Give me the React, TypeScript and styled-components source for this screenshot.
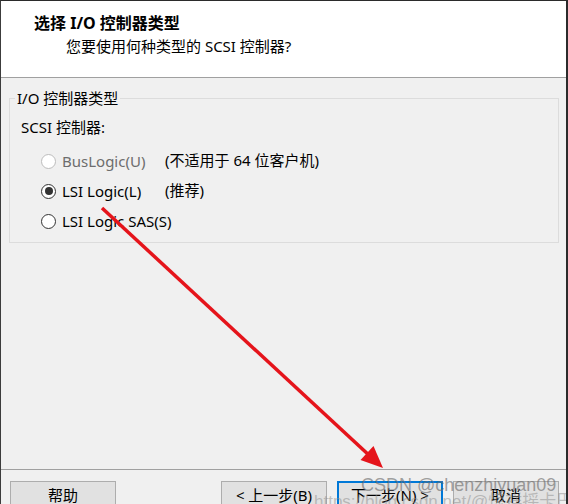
import React from "react";
import styled, { createGlobalStyle } from "styled-components";

const Global = createGlobalStyle`
  html, body { margin: 0; padding: 0; background: #f0f0f0; }
  body { font-family: "Noto Sans", "Noto Sans CJK SC", sans-serif; }
`;

const Window = styled.div`
  position: relative;
  width: 568px;
  height: 504px;
  box-sizing: border-box;
  border-top: 1px solid #2b2b2b;
  border-left: 1px solid #3c3c3c;
  border-right: 2px solid #2b2b2b;
  background: #f0f0f0;
  display: flex;
  flex-direction: column;
  overflow: hidden;
  font-size: 15px;
  color: #000;
`;

const Header = styled.header`
  height: 77px;
  box-sizing: border-box;
  background: #fff;
  border-bottom: 1px solid #a0a0a0;
  padding: 12px 0 0 33px;
`;

const Title = styled.div`
  font-size: 16px;
  font-weight: 700;
  line-height: 20px;
`;

const Subtitle = styled.div`
  margin: 3px 0 0 32px;
  font-size: 15px;
  line-height: 20px;
`;

const Main = styled.main`
  flex: 1;
  padding: 10px 7px 0 8px;
`;

const Group = styled.fieldset`
  margin: 0;
  padding: 0 0 0 11px;
  height: 155px;
  box-sizing: border-box;
  border: 1px solid #dcdcdc;
  min-width: 0;
`;

const Legend = styled.legend`
  margin-left: -6px;
  padding: 0 2px;
  font-size: 15px;
  line-height: 20px;
`;

const FieldLabel = styled.div`
  margin-top: 9px;
  line-height: 20px;
`;

const Options = styled.div`
  margin-top: 9px;
  padding-left: 20px;
  display: grid;
  grid-template-columns: 124px auto;
  grid-auto-rows: 30px;
  align-items: center;
`;

const OptionLabel = styled.label<{ $disabled?: boolean }>`
  display: flex;
  align-items: center;
  gap: 6px;
  line-height: 20px;
  white-space: nowrap;
  color: ${(p) => (p.$disabled ? "#6d6d6d" : "#000")};
`;

const Note = styled.span`
  line-height: 20px;
  margin-top: -3px;
  white-space: nowrap;
`;

const RadioCircle = styled.span<{ $checked?: boolean; $disabled?: boolean }>`
  flex: none;
  width: 15px;
  height: 15px;
  box-sizing: border-box;
  border-radius: 50%;
  border: 1px solid ${(p) => (p.$disabled ? "#bcbcbc" : "#333")};
  background: #fff;
  display: flex;
  align-items: center;
  justify-content: center;
  &::after {
    content: "";
    width: 8px;
    height: 8px;
    border-radius: 50%;
    background: #333;
    display: ${(p) => (p.$checked ? "block" : "none")};
  }
`;

const Footer = styled.footer`
  height: 35px;
  box-sizing: border-box;
  border-top: 1px solid #a0a0a0;
  padding: 11px 7px 0 9px;
  display: flex;
  justify-content: space-between;
  align-items: flex-start;
`;

const ButtonGroup = styled.div`
  display: flex;
  gap: 10px;
`;

const Button = styled.button<{ $focused?: boolean }>`
  width: 106px;
  height: 29px;
  box-sizing: border-box;
  padding: 0;
  margin: 0;
  background: #e1e1e1;
  border: ${(p) => (p.$focused ? "2px solid #0078d7" : "1px solid #adadad")};
  font-family: "Noto Sans", "Noto Sans CJK SC", sans-serif;
  font-size: 15px;
  line-height: ${(p) => (p.$focused ? "25px" : "27px")};
  color: #000;
  white-space: nowrap;
`;

const Overlay = styled.svg`
  position: absolute;
  left: 0;
  top: 0;
  pointer-events: none;
`;

const WatermarkMain = styled.div`
  position: absolute;
  left: 360px;
  top: 474px;
  font-family: "Liberation Sans", Arial, sans-serif;
  font-size: 18px;
  line-height: 20px;
  color: rgba(105, 105, 105, 0.62);
  white-space: nowrap;
  pointer-events: none;
`;

const WatermarkSub = styled.div`
  position: absolute;
  left: 313px;
  top: 491px;
  font-family: "Liberation Sans", "Noto Sans CJK SC", sans-serif;
  font-size: 17px;
  line-height: 20px;
  color: rgba(140, 140, 140, 0.5);
  white-space: nowrap;
  pointer-events: none;
`;

type Opt = { label: string; note?: string; checked?: boolean; disabled?: boolean };

const options: Opt[] = [
  { label: "BusLogic(U)", note: "(不适用于 64 位客户机)", disabled: true },
  { label: "LSI Logic(L)", note: "(推荐)", checked: true },
  { label: "LSI Logic SAS(S)" },
];

export default function App() {
  return (
    <>
      <Global />
      <Window>
        <Header>
          <Title>选择 I/O 控制器类型</Title>
          <Subtitle>您要使用何种类型的 SCSI 控制器?</Subtitle>
        </Header>
        <Main>
          <Group>
            <Legend>I/O 控制器类型</Legend>
            <FieldLabel>SCSI 控制器:</FieldLabel>
            <Options>
              {options.map((o) => (
                <React.Fragment key={o.label}>
                  <OptionLabel $disabled={o.disabled}>
                    <RadioCircle $checked={o.checked} $disabled={o.disabled} />
                    {o.label}
                  </OptionLabel>
                  <Note>{o.note ?? ""}</Note>
                </React.Fragment>
              ))}
            </Options>
          </Group>
        </Main>
        <Footer>
          <Button>帮助</Button>
          <ButtonGroup>
            <Button>&lt; 上一步(B)</Button>
            <Button $focused>下一步(N) &gt;</Button>
            <Button>取消</Button>
          </ButtonGroup>
        </Footer>
        <Overlay width="568" height="504" viewBox="0 0 568 504">
          <line x1="101" y1="207" x2="370" y2="456" stroke="#e5141b" strokeWidth="3.5" />
          <polygon points="382,467 359.5,459 372.5,445" fill="#e5141b" />
        </Overlay>
        <WatermarkMain>CSDN @chenzhiyuan09</WatermarkMain>
        <WatermarkSub>https://blog.csdn.net/@惊祥摇卡巴卡</WatermarkSub>
      </Window>
    </>
  );
}
